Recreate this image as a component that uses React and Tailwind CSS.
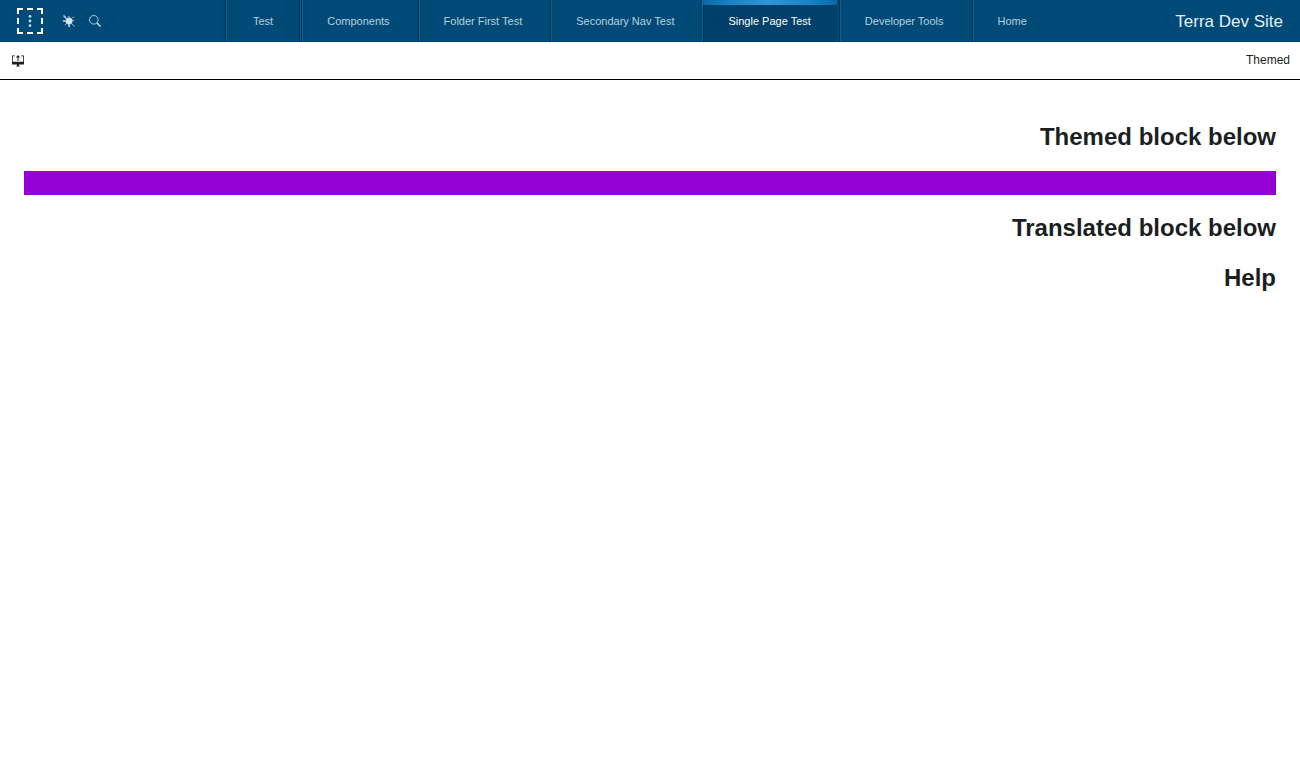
import React from "react";

const tabs = [
  { label: "Test" },
  { label: "Components" },
  { label: "Folder First Test" },
  { label: "Secondary Nav Test" },
  { label: "Single Page Test", active: true },
  { label: "Developer Tools" },
  { label: "Home" },
];

function Logo() {
  return (
    <svg className="size-[26px]" viewBox="0 0 26 26" fill="#fff" aria-hidden="true">
      <path d="M0 0h6v2H2v4H0zM10 0h6v2h-6zM20 0h6v6h-2V2h-4zM0 10h2v6H0zM24 10h2v6h-2zM0 20h2v4h4v2H0zM10 24h6v2h-6zM24 20h2v6h-6v-2h4z" />
      <g fill="#c3d8e4">
        <circle cx="13" cy="8.300" r="1.400" />
        <circle cx="13" cy="13" r="1.400" />
        <circle cx="13" cy="17.700" r="1.400" />
      </g>
    </svg>
  );
}

function ThemeIcon() {
  return (
    <svg className="size-3" viewBox="0 0 12 12" fill="#d5e3ec" aria-hidden="true">
      <circle cx="6" cy="6" r="3.500" />
      <g stroke="#c3d8e4">
        <path d="M0 6h2.500M.5.5l2.700 2.700M6 9v3" strokeWidth="1.500" />
        <path d="M9.500 5.500H11M10.700 1.700L9.200 3.200M2.800 9.200l-1 1M9.200 9.200l2.300 2.300M6 1v1.500" strokeWidth=".9" />
      </g>
    </svg>
  );
}

function SearchIcon() {
  return (
    <svg className="size-3" viewBox="0 0 12 12" fill="none" stroke="#c3d8e4" aria-hidden="true">
      <circle cx="4.800" cy="4.800" r="4.300" strokeWidth=".9" />
      <path d="M7.900 7.900l3.600 3.600" strokeWidth="1.500" />
    </svg>
  );
}

function DisplayIcon() {
  return (
    <svg className="size-3" viewBox="0 0 12 12" fill="#1c1f21" aria-hidden="true">
      <path d="M0 .5h3v.8H.8v5.500h10.400V1.300H9V.5h3v8.900H0zM5 9h2v1.500l1.200 1H3.800l1.200-1z" />
      <path d="M6 0l2.200 2.400H6.500V6h-1V2.400H3.800z" />
    </svg>
  );
}

function Tab({ label, active }) {
  if (active) {
    return (
      <li className="flex">
        <a
          href="#single-page"
          aria-current="page"
          className="relative flex items-center border-l border-[#0a6193] bg-[#00406a] pl-[25px] pr-7 text-white shadow-[inset_1px_0_0_#002b49,inset_-2px_0_0_#004975]"
        >
          <span className="absolute -left-px right-0.5 top-0 h-[5px] bg-[linear-gradient(90deg,#0b68a3,#1583c6_20%,#3195d6_50%,#1583c6_80%,#0b68a3)]" />
          {label}
        </a>
      </li>
    );
  }
  return (
    <li className="group flex">
      <a
        href="#page"
        className="flex min-w-[76px] items-center justify-center border-l border-[#002d4b] pl-[25px] pr-7 text-[#b8d0de] shadow-[inset_1px_0_0_#0a6193] group-first:pl-[27px] group-first:shadow-[inset_1px_0_0_#0a6193,inset_-1px_0_0_#0a6193,inset_-2px_0_0_#002d4b]"
      >
        {label}
      </a>
    </li>
  );
}

export default function App() {
  return (
    <div className="min-h-screen bg-white font-['Liberation_Sans',Arial,sans-serif] text-[#1c1f21]">
      <header className="flex h-[42px] bg-[#004a78]">
        <div className="flex w-[225px] shrink-0 items-center pl-[17px]">
          <button type="button" aria-label="Menu">
            <Logo />
          </button>
          <button type="button" aria-label="Theme" className="ml-5">
            <ThemeIcon />
          </button>
          <button type="button" aria-label="Search" className="ml-3.5">
            <SearchIcon />
          </button>
        </div>
        <nav aria-label="Primary" className="flex">
          <ul className="flex whitespace-nowrap text-[11px]">
            {tabs.map((tab) => (
              <Tab key={tab.label} {...tab} />
            ))}
          </ul>
        </nav>
        <div className="ml-auto whitespace-nowrap pr-[17px] text-[17px]/[44px] text-[#e5edf2]">
          Terra Dev Site
        </div>
      </header>
      <div className="flex h-[38px] justify-between border-b border-black pl-3 pr-2.5">
        <button type="button" aria-label="Open display">
          <DisplayIcon />
        </button>
        <h1 className="text-xs/9">Themed</h1>
      </div>
      <main className="px-6 pt-[43px] text-right text-2xl/7 font-bold">
        <h2>Themed block below</h2>
        <div className="mt-5 h-6 bg-[#9400d3]" />
        <div className="mt-[19px] flex flex-col gap-[22px]">
          <h2>Translated block below</h2>
          <h2>Help</h2>
        </div>
      </main>
    </div>
  );
}
